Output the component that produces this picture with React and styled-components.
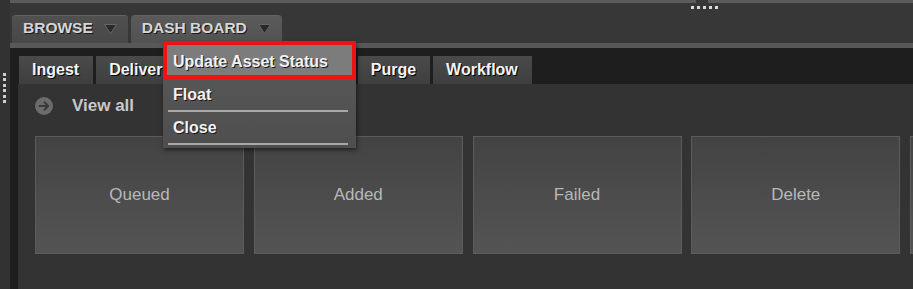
import React from "react";
import styled, { createGlobalStyle } from "styled-components";

const GlobalStyle = createGlobalStyle`
  html, body {
    margin: 0;
    padding: 0;
    background: #333;
  }
  body {
    font-family: "Liberation Sans", Arial, sans-serif;
  }
  * {
    box-sizing: border-box;
  }
`;

const topTabs = [
  { label: "BROWSE", active: false },
  { label: "DASH BOARD", active: true },
];

const subTabs = ["Ingest", "Delivery", "Export", "Archive", "Purge", "Workflow"];

// last card is cut off by the window edge, its label is not visible
const cards = ["Queued", "Added", "Failed", "Delete", ""];

const menuItems = [
  { label: "Update Asset Status", highlight: true },
  { label: "Float" },
  { label: "Close" },
];

const Arrow = () => (
  <svg width="13" height="10" viewBox="0 0 13 10">
    <polygon points="0.5,0.5 12.5,0.5 6.5,9.5" fill="#2a2a2a" stroke="#666" strokeWidth="1" />
  </svg>
);

const CircleArrow = () => (
  <svg width="18" height="18" viewBox="0 0 18 18">
    <circle cx="9" cy="9" r="9" fill="#6c6c6c" />
    <path d="M4.5 9 H13 M9.5 5.3 L13.2 9 L9.5 12.7" fill="none" stroke="#3a3a3a" strokeWidth="2" strokeLinecap="round" strokeLinejoin="round" />
  </svg>
);

const App = () => {
  return (
    <>
      <GlobalStyle />
      <Screen>
        <Gutter>
          <VDots>
            {[0, 1, 2, 3, 4, 5].map((i) => (
              <Dot key={i} />
            ))}
          </VDots>
        </Gutter>
        <Main>
          <TopStrip>
            <Handle />
            <TopTabs>
              {topTabs.map((t) => (
                <TopTab key={t.label} $active={t.active}>
                  <span>{t.label}</span>
                  <Arrow />
                </TopTab>
              ))}
            </TopTabs>
          </TopStrip>
          <Body>
            <DarkStrip />
            <Panel>
              <SubTabBar>
                {subTabs.map((t) => (
                  <SubTab key={t}>{t}</SubTab>
                ))}
              </SubTabBar>
              <Content>
                <ViewAll>
                  <CircleArrow />
                  <span>View all</span>
                </ViewAll>
                <Cards>
                  {cards.map((c, i) => (
                    <Card key={i}>{c}</Card>
                  ))}
                </Cards>
              </Content>
            </Panel>
          </Body>
        </Main>
        <Menu>
          {menuItems.map((m) => (
            <React.Fragment key={m.label}>
              <MenuItem $highlight={m.highlight}>{m.label}</MenuItem>
              {!m.highlight && <MenuSep />}
            </React.Fragment>
          ))}
        </Menu>
      </Screen>
    </>
  );
};

//Styles
const Screen = styled.div`
  position: relative;
  display: flex;
  width: 913px;
  height: 289px;
  overflow: hidden;
  background: #333;
`;
const Gutter = styled.div`
  width: 10px;
  flex-shrink: 0;
  background: #323232;
  padding-top: 73px;
  display: flex;
  justify-content: center;
`;
const VDots = styled.div`
  display: flex;
  flex-direction: column;
  gap: 2.4px;
  align-items: center;
  margin-left: -1px;
  height: fit-content;
`;
const Dot = styled.div`
  width: 3px;
  height: 3px;
  background: #cfcfcf;
`;
const Main = styled.div`
  flex: 1;
  display: flex;
  flex-direction: column;
  min-width: 0;
`;
const TopStrip = styled.div`
  position: relative;
  background: #373737;
  border-top: 3px solid #5b5b5b;
  padding: 12px 0 0 2px;
  border-bottom: 5px solid #585858;
`;
const Handle = styled.div`
  position: absolute;
  top: -3px;
  left: 686px;
  width: 12px;
  height: 3px;
  background: #373737;
  &::after {
    content: "";
    position: absolute;
    left: -5px;
    top: 6px;
    width: 28px;
    height: 3px;
    background: repeating-linear-gradient(90deg, #d8d8d8 0 3px, transparent 3px 6px);
  }
`;
const TopTabs = styled.div`
  display: flex;
  gap: 3px;
`;
const TopTab = styled.div`
  display: flex;
  align-items: center;
  gap: 11px;
  height: 28px;
  padding: 0 11px 3px 11px;
  border-radius: 4px 4px 0 0;
  background: ${(p) => (p.$active ? "linear-gradient(#5a5a5a, #525252)" : "linear-gradient(#505050, #484848)")};
  border-top: 1px solid #626262;
  color: #d6d6d6;
  font-weight: bold;
  font-size: 15.5px;
  text-shadow: 1px 1px 0 #1a1a1a;
  svg {
    margin-top: 1px;
  }
`;
const Body = styled.div`
  flex: 1;
  display: flex;
  min-height: 0;
`;
const DarkStrip = styled.div`
  width: 8px;
  flex-shrink: 0;
  background: #1e1e1e;
`;
const Panel = styled.div`
  flex: 1;
  display: flex;
  flex-direction: column;
  min-width: 0;
`;
const SubTabBar = styled.div`
  display: flex;
  gap: 3px;
  height: 36px;
  padding: 8px 0 0 1px;
  background: #1e1e1e;
`;
const SubTab = styled.div`
  height: 28px;
  padding: 0 14px 0 13px;
  display: flex;
  align-items: center;
  background: linear-gradient(#4a4a4a, #3f3f3f);
  color: #f4f4f4;
  font-weight: bold;
  font-size: 16px;
  text-shadow: 1px 1px 0 #000;
`;
const Content = styled.div`
  flex: 1;
  background: #333;
  padding: 13px 0 0 17px;
`;
const ViewAll = styled.div`
  display: flex;
  align-items: center;
  gap: 19px;
  height: 18px;
  color: #c6c8cc;
  font-weight: bold;
  font-size: 17px;
`;
const Cards = styled.div`
  display: flex;
  gap: 9.75px;
  margin-top: 21px;
`;
const Card = styled.div`
  flex-shrink: 0;
  width: 209px;
  height: 118px;
  display: flex;
  align-items: center;
  justify-content: center;
  background: linear-gradient(#434343, #545454);
  border: 1px solid #5c5c5c;
  color: #b8b8b8;
  font-size: 17px;
`;
const Menu = styled.div`
  position: absolute;
  left: 163px;
  top: 41px;
  width: 193px;
  padding-bottom: 3px;
  background: linear-gradient(#5a5a5a, #4e4e4e);
  box-shadow: 1px 2px 4px rgba(0, 0, 0, 0.5);
`;
const MenuItem = styled.div`
  height: ${(p) => (p.$highlight ? "38px" : "31px")};
  display: flex;
  align-items: center;
  padding-left: ${(p) => (p.$highlight ? "6px" : "10px")};
  padding-top: ${(p) => (p.$highlight ? "3px" : "0")};
  border: ${(p) => (p.$highlight ? "4px solid #f01212" : "none")};
  background: ${(p) => (p.$highlight ? "#7c7c7c" : "transparent")};
  color: #f2f2f2;
  font-weight: bold;
  font-size: 16px;
  text-shadow: 1px 1px 0 #1a1a1a;
`;
const MenuSep = styled.div`
  height: 2px;
  margin: 0 8px 0 5px;
  background: #a8a8a8;
`;

export default App;
